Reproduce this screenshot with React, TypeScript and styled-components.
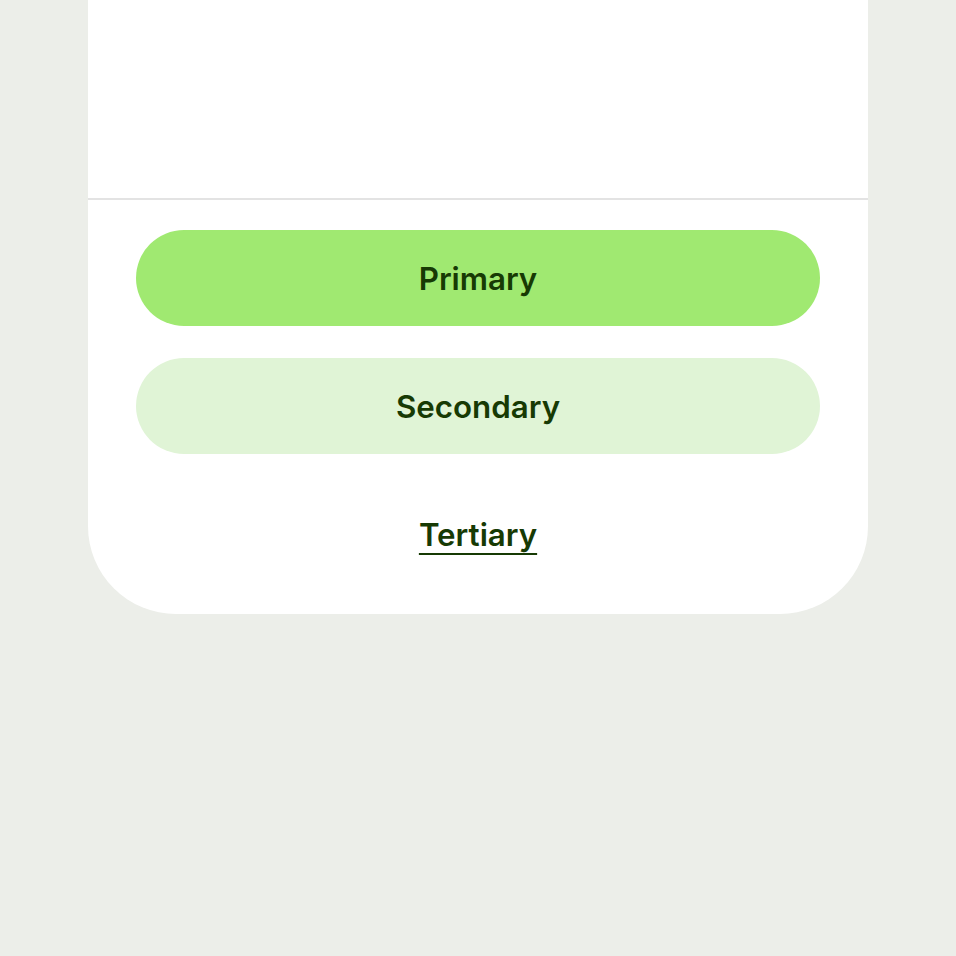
import styled, { createGlobalStyle } from 'styled-components';

const GlobalStyle = createGlobalStyle`
    html, body {
        margin: 0;
        padding: 0;
        background: #eceee9;
        font-family: Inter, "Noto Sans", sans-serif;
    }
`;

function App() {
    return (
        <>
            <GlobalStyle />
            <Page>
                <Sheet>
                    <Content />
                    <Actions>
                        <PillButton variant="primary">Primary</PillButton>
                        <PillButton variant="secondary">Secondary</PillButton>
                        <PillButton variant="tertiary">Tertiary</PillButton>
                    </Actions>
                </Sheet>
            </Page>
        </>
    );
}

const Page = styled.div`
    min-height: 956px;
    display: flex;
    justify-content: center;
    align-items: flex-start;
`;

const Sheet = styled.div`
    width: 780px;
    background: #ffffff;
    border-radius: 0 0 88px 88px;
    overflow: hidden;
`;

const Content = styled.div`
    height: 198px;
    border-bottom: 2px solid #e3e3e3;
`;

const Actions = styled.div`
    display: flex;
    flex-direction: column;
    gap: 32px;
    padding: 30px 48px 32px;
`;

const PillButton = styled.button<{ variant: 'primary' | 'secondary' | 'tertiary' }>`
    height: 96px;
    padding: 2px 0 0;
    border: none;
    border-radius: 48px;
    font-family: Inter, "Noto Sans", sans-serif;
    font-size: 31.3px;
    font-weight: 600;
    color: #173a04;
    cursor: pointer;
    background: ${p =>
        p.variant === 'primary' ? '#a0e971' : p.variant === 'secondary' ? '#e0f4d6' : 'transparent'};
    text-decoration: ${p => (p.variant === 'tertiary' ? 'underline' : 'none')};
    text-decoration-thickness: 2px;
    text-underline-offset: 7px;
`;

export default App;
